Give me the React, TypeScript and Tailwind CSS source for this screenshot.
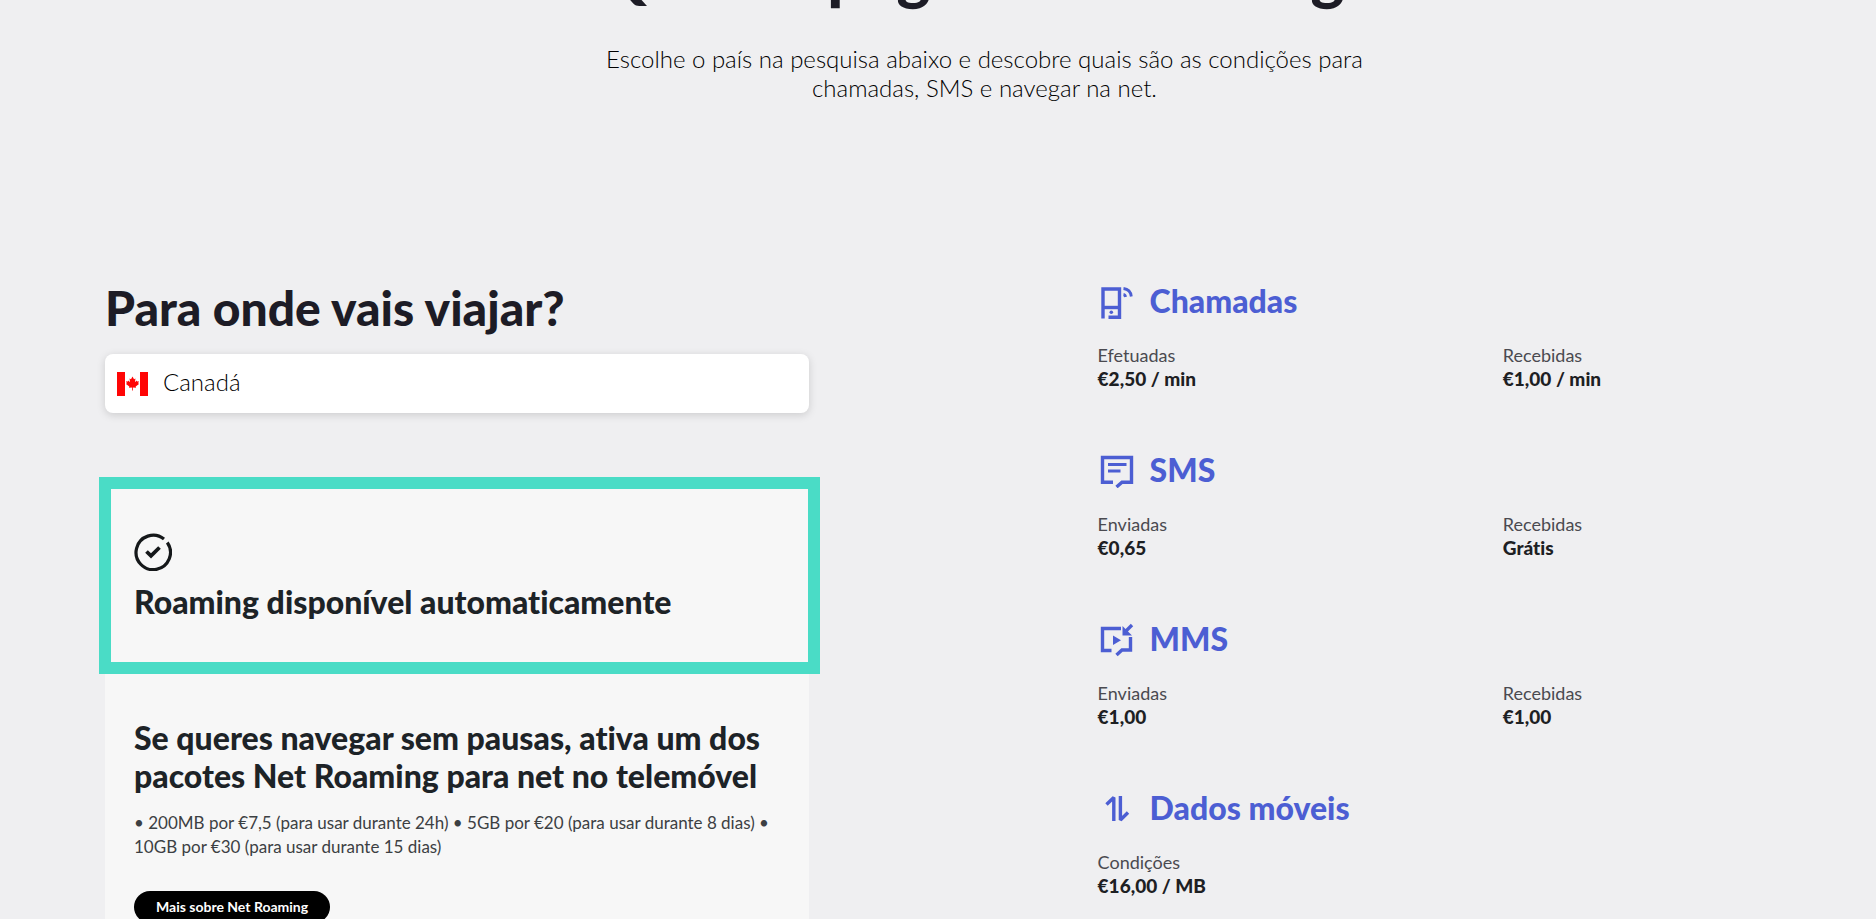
import React, { useState } from "react";

type Rate = { label: string; value: string };

type RateGroup = {
  title: string;
  icon: React.ReactNode;
  rates: Rate[];
};

const iconProps = {
  width: 36,
  height: 36,
  viewBox: "0 0 36 36",
  fill: "none",
  stroke: "currentColor",
  strokeWidth: 3.4,
  "aria-hidden": true,
} as const;

const CallIcon: React.FC = () => (
  <svg {...iconProps}>
    <path d="M5 35.500V6H21.500V34.200H10.500" />
    <path d="M5 24.500H21.500" />
    <circle cx="13.300" cy="29.300" r="1.800" fill="currentColor" stroke="none" />
    <path d="M25.500 5.500C30 6 32.800 9 33.300 13.500" strokeWidth="2.800" />
    <path d="M25.500 11.500C26.700 11.700 27.300 12.300 27.500 14" strokeWidth="2.800" />
  </svg>
);

const SmsIcon: React.FC = () => (
  <svg {...iconProps}>
    <path d="M15 30.300H4.500V5.500H33.500V30.300H24L18.500 35" />
    <path d="M10 12.500H28.500M10 19H22.500" strokeWidth="2.800" />
  </svg>
);

const MmsIcon: React.FC = () => (
  <svg {...iconProps}>
    <path d="M23 7.500H4.500V29.500H13.500" />
    <path d="M32.500 16V29H24L18.500 34" />
    <path d="M15 14.500V24L23 19.200Z" fill="currentColor" stroke="none" />
    <path d="M34 4L28 10" />
    <path d="M24.500 5V14.500H34Z" fill="currentColor" stroke="none" />
  </svg>
);

const DataIcon: React.FC = () => (
  <svg {...iconProps} strokeLinejoin="bevel">
    <path d="M15.800 31V7.500L8.500 14.500" />
    <path d="M22.400 6V30L30 22.500" />
  </svg>
);

const groups: RateGroup[] = [
  {
    title: "Chamadas",
    icon: <CallIcon />,
    rates: [
      { label: "Efetuadas", value: "€2,50 / min" },
      { label: "Recebidas", value: "€1,00 / min" },
    ],
  },
  {
    title: "SMS",
    icon: <SmsIcon />,
    rates: [
      { label: "Enviadas", value: "€0,65" },
      { label: "Recebidas", value: "Grátis" },
    ],
  },
  {
    title: "MMS",
    icon: <MmsIcon />,
    rates: [
      { label: "Enviadas", value: "€1,00" },
      { label: "Recebidas", value: "€1,00" },
    ],
  },
  {
    title: "Dados móveis",
    icon: <DataIcon />,
    rates: [{ label: "Condições", value: "€16,00 / MB" }],
  },
];

const CanadaFlag: React.FC = () => (
  <svg width="31" height="24" viewBox="0 0 31 24" className="shrink-0" aria-hidden>
    <rect width="31" height="24" fill="#fff" />
    <rect width="8" height="24" fill="#ff0505" />
    <rect x="23" width="8" height="24" fill="#ff0505" />
    <path
      d="M15.500 4.500L17 7.300L18.500 6.600L17.900 10.200L19.600 8.600L20 9.600L21.900 9.300L21.200 11.300L22 11.900L18.700 14.600L19 15.800L15.900 15.400V18.500H15.100V15.400L12 15.800L12.300 14.600L9 11.900L9.800 11.300L9.100 9.300L11 9.600L11.400 8.600L13.100 10.200L12.500 6.600L14 7.300Z"
      fill="#ff0505"
    />
  </svg>
);

const CheckCircle: React.FC = () => (
  <svg
    width="38"
    height="38"
    viewBox="0 0 38 38"
    fill="none"
    stroke="#15181a"
    strokeWidth="3.200"
    aria-hidden
  >
    <path d="M30 6A17.200 17.200 0 1 0 33.300 9.500" />
    <path d="M12.500 18.500L17 22.800L25.500 14.500" strokeWidth="3.800" />
  </svg>
);

const RateSection: React.FC<{ group: RateGroup }> = ({ group }) => (
  <section>
    <h3 className="flex items-center gap-4 text-[32px] leading-9 font-black text-[#4c5ed3]">
      {group.icon}
      {group.title}
    </h3>
    <dl className="mt-6 grid grid-cols-2 gap-x-11">
      {group.rates.map((rate) => (
        <div key={rate.label}>
          <dt className="text-lg leading-6 text-[#4a4a50]">{rate.label}</dt>
          <dd className="text-[19px] leading-6 font-black text-[#1d2023]">
            {rate.value}
          </dd>
        </div>
      ))}
    </dl>
  </section>
);

const App: React.FC = () => {
  const [country, setCountry] = useState("Canadá");

  return (
    <main className="min-h-screen overflow-hidden bg-[#efeff1] pr-3 pl-[105px] font-['Lato',sans-serif] [font-variant-ligatures:none]">
      <header className="-mt-[69px] text-center">
        <h1 className="text-[64px] leading-[84px] font-black text-[#1d1c26]">
          Quanto pagas em roaming?
        </h1>
        <p className="mx-auto mt-[29px] max-w-[800px] text-2xl leading-[29px] font-light text-black">
          Escolhe o país na pesquisa abaixo e descobre quais são as condições para
          chamadas, SMS e navegar na net.
        </p>
      </header>

      <div className="mt-44 grid grid-cols-[40%_1fr] gap-x-[289px]">
        <div>
          <h2 className="text-5xl leading-[60px] font-black text-[#1d1c26]">
            <label htmlFor="country">Para onde vais viajar?</label>
          </h2>
          <div className="mt-4 flex h-[59px] items-center gap-[15px] rounded-lg bg-white px-3 shadow-[0_2px_8px_rgba(0,0,0,0.15)]">
            <CanadaFlag />
            <input
              id="country"
              type="text"
              value={country}
              onChange={(e) => setCountry(e.target.value)}
              className="w-full bg-transparent pb-1 text-2xl font-light text-black outline-none"
            />
          </div>

          <div className="mt-16 bg-[#f7f7f7] pb-12">
            <section className="-mr-[11px] -ml-1.5 h-[197px] border-12 border-[#4adcc6] px-[23px] pt-11">
              <CheckCircle />
              <h3 className="mt-3 text-[32px] leading-[38px] font-black text-[#1d2327]">
                Roaming disponível automaticamente
              </h3>
            </section>
            <section className="px-[29px] pt-[45px]">
              <h3 className="text-[32px] leading-[38px] font-black text-[#1d2327]">
                Se queres navegar sem pausas, ativa um dos pacotes Net Roaming para
                net no telemóvel
              </h3>
              <p className="mt-4 text-[17px] leading-6 text-[#3c4043]">
                • 200MB por €7,5 (para usar durante 24h) • 5GB por €20 (para usar
                durante 8 dias) • 10GB por €30 (para usar durante 15 dias)
              </p>
              <a
                href="#net-roaming"
                className="mt-8 inline-block rounded-full bg-black px-[22px] py-1 text-sm leading-6 font-bold text-white"
              >
                Mais sobre Net Roaming
              </a>
            </section>
          </div>
        </div>

        <div className="mt-[5px] flex flex-col gap-[61px]">
          {groups.map((group) => (
            <RateSection key={group.title} group={group} />
          ))}
        </div>
      </div>
    </main>
  );
};

export default App;
